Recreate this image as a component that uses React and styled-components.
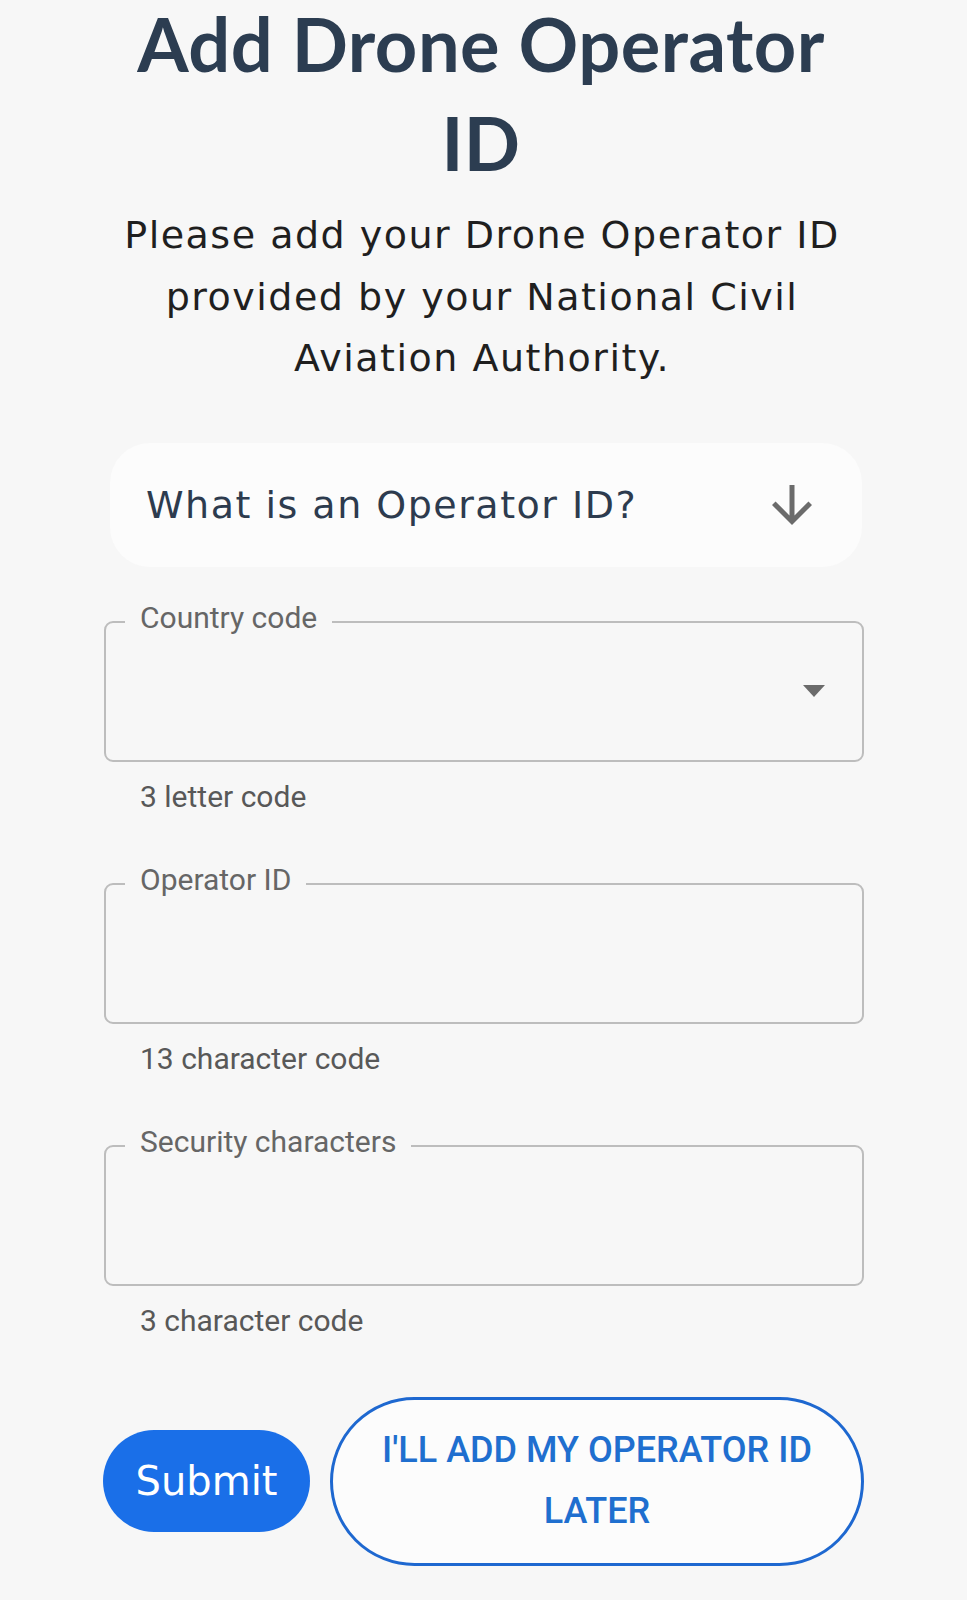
import React from 'react';
import styled, {createGlobalStyle} from 'styled-components';

const GlobalStyle = createGlobalStyle`
  html, body {
    margin: 0;
    padding: 0;
    background: #f7f7f7;
  }
  * {
    box-sizing: border-box;
  }
`;

const Page = styled.div`
  width: 967px;
  min-height: 1600px;
  overflow: hidden;
  background: #f7f7f7;
`;

const Column = styled.div`
  width: 760px;
  margin-left: 104px;
  display: flex;
  flex-direction: column;
`;

const Title = styled.h1`
  margin: -6px 6px 0 0;
  font-family: Lato, sans-serif;
  font-weight: 700;
  font-size: 74px;
  letter-spacing: 0.5px;
  line-height: 99px;
  color: #2c3d51;
  text-align: center;
`;

const Intro = styled.p`
  margin: 13px 4px 0 0;
  font-family: "DejaVu Sans", sans-serif;
  font-size: 38px;
  letter-spacing: 1.5px;
  line-height: 61.5px;
  color: #1f1f1f;
  text-align: center;
`;

const Accordion = styled.button`
  margin: 53px 0 0 6px;
  width: 752px;
  height: 124px;
  border: none;
  border-radius: 40px;
  background: #fcfcfc;
  display: flex;
  align-items: center;
  justify-content: space-between;
  padding: 0 40px 0 36px;
  cursor: pointer;
`;

const AccordionText = styled.span`
  font-family: "DejaVu Sans", sans-serif;
  font-size: 38px;
  letter-spacing: 1.5px;
  color: #2d3b4e;
`;

const Field = styled.div`
  display: flex;
  flex-direction: column;
  margin-top: ${p => p.$first ? 36 : 48}px;
`;

const Outline = styled.fieldset`
  margin: 0;
  padding: 0;
  border: 2px solid #bdbdbd;
  border-radius: 9px;
`;

const Legend = styled.legend`
  margin-left: 19px;
  padding: 0 15px 8px;
  font-family: Roboto, sans-serif;
  font-size: 30px;
  line-height: 30px;
  color: #666;
`;

const FieldBody = styled.div`
  height: 119px;
  padding: 0 37px 18px 0;
  display: flex;
  align-items: center;
  justify-content: flex-end;
`;

const Helper = styled.div`
  margin: 15px 0 0 36px;
  font-family: Roboto, sans-serif;
  font-size: 30px;
  line-height: 40px;
  color: #585858;
`;

const Actions = styled.div`
  margin: 56px 0 0 -1px;
  display: flex;
  align-items: center;
  gap: 20px;
`;

const SubmitButton = styled.button`
  width: 207px;
  height: 102px;
  flex: none;
  border: none;
  border-radius: 51px;
  background: #1a6fe8;
  color: #fff;
  font-family: "DejaVu Sans", sans-serif;
  font-size: 40px;
  cursor: pointer;
`;

const LaterButton = styled.button`
  flex: 1;
  height: 169px;
  border: 3px solid #1e68d0;
  border-radius: 85px;
  background: #fcfcfc;
  color: #1f6fcf;
  font-family: Roboto, sans-serif;
  font-weight: 500;
  font-size: 36px;
  line-height: 61.5px;
  text-transform: uppercase;
  padding: 0 40px;
  cursor: pointer;
`;

const ArrowDown = () => (
  <svg width="60" height="60" viewBox="0 0 24 24" fill="#6b6b6b">
    <path d="M20 12l-1.41-1.41L13 16.17V4h-2v12.17l-5.58-5.59L4 12l8 8 8-8z" />
  </svg>
);

const DropTriangle = () => (
  <svg width="22" height="12" viewBox="0 0 22 12">
    <polygon points="0,0 22,0 11,12" fill="#6b6b6b" />
  </svg>
);

const OutlinedField = ({label, helper, select, first}) => (
  <Field $first={first}>
    <Outline>
      <Legend>{label}</Legend>
      <FieldBody>{select && <DropTriangle />}</FieldBody>
    </Outline>
    <Helper>{helper}</Helper>
  </Field>
);

const App = () => (
  <Page>
    <GlobalStyle />
    <Column>
      <Title>Add Drone Operator ID</Title>
      <Intro>Please add your Drone Operator ID provided by your National Civil Aviation Authority.</Intro>
      <Accordion>
        <AccordionText>What is an Operator ID?</AccordionText>
        <ArrowDown />
      </Accordion>
      <OutlinedField first label="Country code" helper="3 letter code" select />
      <OutlinedField label="Operator ID" helper="13 character code" />
      <OutlinedField label="Security characters" helper="3 character code" />
      <Actions>
        <SubmitButton>Submit</SubmitButton>
        <LaterButton>I'll add my Operator ID later</LaterButton>
      </Actions>
    </Column>
  </Page>
);

export default App;
